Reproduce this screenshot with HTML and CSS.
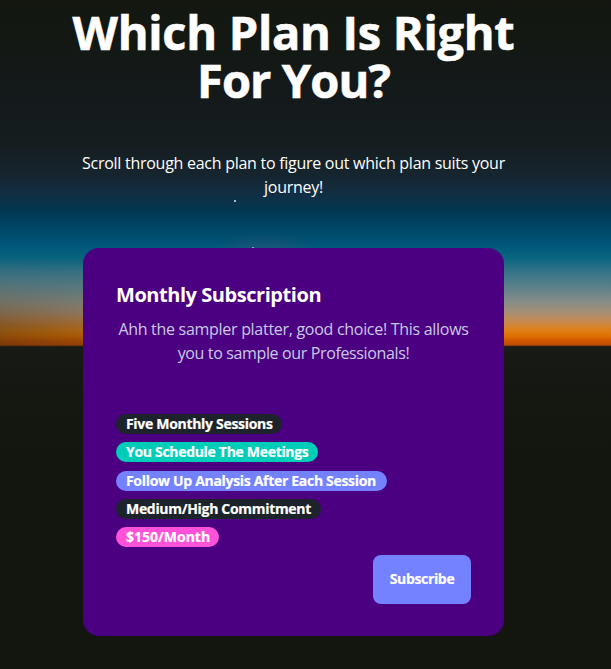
FILE: index.html
```html
<!DOCTYPE html>
<html lang="en">
<head>
<meta charset="utf-8">
<title>Which Plan Is Right For You?</title>
<link rel="stylesheet" href="styles.css">
</head>
<body>
<main class="hero">
  <svg class="stars" viewBox="0 0 611 669" aria-hidden="true">
    <rect x="234" y="200" width="2" height="2" fill="#a9b8d0"/>
    <rect x="252" y="247" width="2" height="1" fill="#8fa9c0"/>
  </svg>
  <div class="content">
    <h1 class="heading"><span class="h-one">Which Plan Is Right</span><br><span class="h-two">For You?</span></h1>
    <p class="intro"><span class="i-one">Scroll through each plan to figure out which plan suits your</span><br><span class="i-two">journey!</span></p>
    <section class="card">
      <h2 class="card-title">Monthly Subscription</h2>
      <p class="card-text"><span class="c-one">Ahh the sampler platter, good choice! This allows</span><br><span class="c-two">you to sample our Professionals!</span></p>
      <div class="badges">
        <div class="badge neutral b-one">Five Monthly Sessions</div>
        <div class="badge accent b-two">You Schedule The Meetings</div>
        <div class="badge primary b-three">Follow Up Analysis After Each Session</div>
        <div class="badge neutral b-four">Medium/High Commitment</div>
        <div class="badge secondary b-five">$150/Month</div>
      </div>
      <div class="actions"><button class="btn" type="button">Subscribe</button></div>
    </section>
  </div>
</main>
</body>
</html>
```
FILE: styles.css
```css
* { box-sizing: border-box; }
body, h1, h2, p { margin: 0; }
body {
  height: 669px;
  overflow: hidden;
  background: #13160f;
  color: #fff;
  font-family: "Segoe UI", "Open Sans", "Noto Sans", sans-serif;
  font-size: 16px;
  line-height: 24px;
}
.hero {
  position: relative;
  height: 669px;
  padding: 8px 24px 0 0;
  background:
    linear-gradient(to bottom, transparent 346px, #171a15 347px, #151811 400px, #13160f 460px),
    radial-gradient(ellipse 50px 18px at 265px 250px, rgba(80, 80, 120, .35), transparent),
    linear-gradient(to bottom,
      #131710 0, #131813 40px, #141a1b 95px, #151d1f 145px,
      #15252f 175px, #122e42 193px, #023650 210px, #004464 226px,
      #00577a 246px, #086580 258px, #377489 272px, #5d8189 288px,
      #878d87 302px, #a58f76 312px, #c9894c 322px, #de8118 330px,
      #df7000 336px, #cf5500 341px, #bd4b04 345px, #522b10 346px, #1b1b16 347px);
}
/* Dims the glow toward the left edge of the horizon */
.hero::before {
  content: "";
  position: absolute;
  top: 250px;
  left: 0;
  width: 300px;
  height: 96px;
  background: linear-gradient(to right, rgba(58, 40, 16, .5), rgba(58, 40, 16, .32) 83px, transparent);
  -webkit-mask-image: linear-gradient(to bottom, transparent, rgba(0, 0, 0, .25) 35px, #000 75px);
  mask-image: linear-gradient(to bottom, transparent, rgba(0, 0, 0, .25) 35px, #000 75px);
}
.stars { position: absolute; top: 0; left: 0; width: 611px; height: 669px; }
.content {
  position: relative;
  width: 421px;
  margin: 0 auto;
  text-align: center;
}
.content span { white-space: nowrap; }
.heading {
  margin: 0 -20px;
  font-size: 47px;
  line-height: 48px;
  font-weight: 700;
  -webkit-text-stroke: .6px #fff;
}
.h-one { letter-spacing: -.3px; }
.h-two { letter-spacing: -.9px; }
.intro { margin: 47px -10px 49px; }
.i-one { letter-spacing: -.27px; }
.i-two { letter-spacing: -.25px; }
.c-one { letter-spacing: -.29px; }
.c-two { letter-spacing: -.36px; }
.card {
  height: 388px;
  padding: 33px;
  border-radius: 16px;
  background: #4b0082;
}
.card-title {
  margin-bottom: 8px;
  font-size: 20px;
  line-height: 28px;
  font-weight: 700;
  text-align: left;
  letter-spacing: -.45px;
}
.card-text { height: 97px; color: #c9cbe6; }
.badges {
  display: flex;
  flex-direction: column;
  align-items: flex-start;
  gap: 8.25px;
}
.badge {
  height: 20px;
  padding: 0 10px;
  border-radius: 10px;
  font-size: 14px;
  line-height: 20px;
  font-weight: 700;
  white-space: nowrap;
  text-align: left;
  letter-spacing: -.31px;
  -webkit-text-stroke: .2px #fff;
}
.b-one { width: 166px; }
.b-two { width: 202px; }
.b-three { width: 271px; }
.b-four { width: 205px; }
.b-five { width: 103px; letter-spacing: 0; }
.neutral { background: #1d232a; }
.accent { background: #00cdb8; }
.primary { background: #7582ff; }
.secondary { background: #ff52d9; }
.actions { display: flex; justify-content: flex-end; margin-top: 8px; }
.btn {
  width: 98px;
  height: 49px;
  padding: 0 0 1px;
  border: 0;
  border-radius: 8px;
  background: #7582ff;
  color: #fff;
  font: 700 14px/20px "Segoe UI", "Open Sans", "Noto Sans", sans-serif;
  letter-spacing: -.33px;
  -webkit-text-stroke: .2px #fff;
}
```
